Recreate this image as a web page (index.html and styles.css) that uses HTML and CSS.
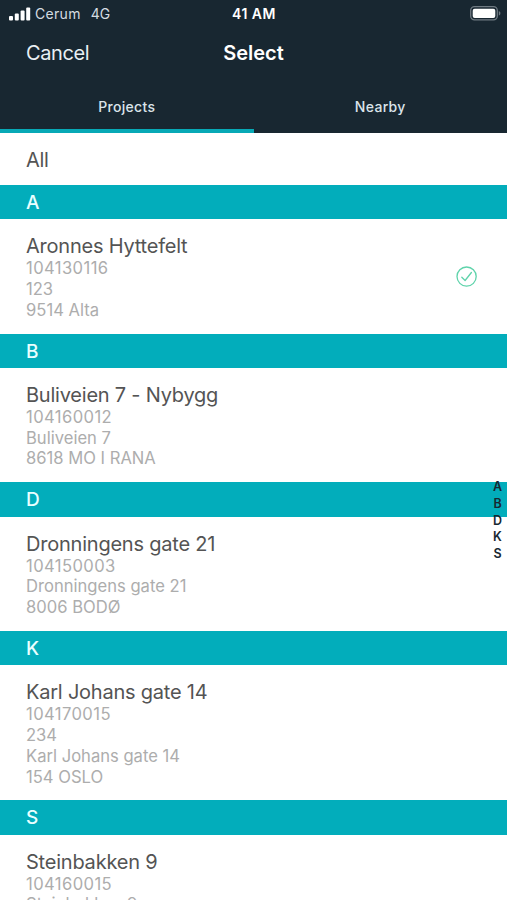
FILE: index.html
```html
<!DOCTYPE html>
<html lang="en">
<head>
    <meta charset="UTF-8">
    <meta name="viewport" content="width=device-width, initial-scale=1.0">
    <title>Select</title>
    <link rel="stylesheet" href="styles.css">
</head>
<body>
    <header class="header">
        <div class="status-bar">
            <div class="carrier">
                <svg class="signal" width="22" height="14" viewBox="0 0 22 14" fill="#fff">
                    <rect x="0" y="9" width="4" height="4.5" rx="1"/>
                    <rect x="5.8" y="6.5" width="4" height="7" rx="1"/>
                    <rect x="11.6" y="3.5" width="4" height="10" rx="1"/>
                    <rect x="17.2" y="0.5" width="4" height="13" rx="1"/>
                </svg>
                <span class="carrier-name">Cerum</span>
                <span class="network">4G</span>
            </div>
            <span class="time">41 AM</span>
            <svg class="battery" width="31" height="15" viewBox="0 0 31 15">
                <rect x="0.7" y="0.7" width="26.6" height="13.2" rx="3.8" fill="none" stroke="#6f7a82" stroke-width="1.3"/>
                <rect x="2.7" y="2.7" width="22.6" height="9.2" rx="2" fill="#fff"/>
                <path d="M28.8 5v4.6c1-.4 1.6-1.3 1.6-2.3s-.6-1.9-1.6-2.3z" fill="#6f7a82"/>
            </svg>
        </div>
        <nav class="nav-bar">
            <a class="cancel">Cancel</a>
            <h1 class="title">Select</h1>
        </nav>
        <div class="tabs">
            <div class="tab active">Projects</div>
            <div class="tab">Nearby</div>
        </div>
    </header>

    <main class="list">
        <div class="all">All</div>

        <h2 class="section">A</h2>
        <div class="item">
            <div class="info">
                <h3 class="name">Aronnes Hyttefelt</h3>
                <p class="number">104130116</p>
                <p>123</p>
                <p>9514 Alta</p>
            </div>
            <svg class="check" width="22" height="22" viewBox="0 0 22 22" fill="none" stroke="#5fd3ab" stroke-width="1.3">
                <circle cx="10.6" cy="10.6" r="9.6"/>
                <path d="M5.8 11.2l3.3 3.3 6.3-8" stroke-linecap="round" stroke-linejoin="round"/>
            </svg>
        </div>

        <h2 class="section">B</h2>
        <div class="item">
            <div class="info">
                <h3 class="name">Buliveien 7 - Nybygg</h3>
                <p class="number">104160012</p>
                <p>Buliveien 7</p>
                <p>8618 MO I RANA</p>
            </div>
        </div>

        <h2 class="section">D</h2>
        <div class="item">
            <div class="info">
                <h3 class="name">Dronningens gate 21</h3>
                <p class="number">104150003</p>
                <p>Dronningens gate 21</p>
                <p>8006 BODØ</p>
            </div>
        </div>

        <h2 class="section">K</h2>
        <div class="item">
            <div class="info">
                <h3 class="name">Karl Johans gate 14</h3>
                <p class="number">104170015</p>
                <p>234</p>
                <p>Karl Johans gate 14</p>
                <p>154 OSLO</p>
            </div>
        </div>

        <h2 class="section">S</h2>
        <div class="item">
            <div class="info">
                <h3 class="name">Steinbakken 9</h3>
                <p class="number">104160015</p>
                <p>Steinbakken 9</p>
            </div>
        </div>
    </main>

    <div class="index">
        <span>A</span>
        <span>B</span>
        <span>D</span>
        <span>K</span>
        <span>S</span>
    </div>
</body>
</html>
```

FILE: styles.css
```css
* {
    box-sizing: border-box;
}

body {
    margin: 0;
    height: 900px;
    overflow: hidden;
    position: relative;
    display: flex;
    flex-direction: column;
    background-color: #fff;
    font-family: Inter, "Liberation Sans", sans-serif;
}

h1, h2, h3, p {
    margin: 0;
    font-weight: 400;
}

.header {
    flex: none;
    height: 133px;
    background-color: #182731;
    color: #fff;
    display: flex;
    flex-direction: column;
}

.status-bar {
    height: 27px;
    padding: 0 6px 0 9px;
    display: grid;
    grid-template-columns: 1fr auto 1fr;
    align-items: center;
    font-size: 14px;
}

.carrier {
    display: flex;
    align-items: center;
    color: #d5dce1;
}

.carrier-name {
    margin-left: 4px;
    letter-spacing: 0.3px;
}

.network {
    margin-left: 10px;
}

.time {
    margin-right: 2px;
    font-weight: 600;
    letter-spacing: 0.5px;
}

.battery {
    justify-self: end;
}

.nav-bar {
    height: 52px;
    padding: 0 26px;
    display: grid;
    grid-template-columns: 1fr auto 1fr;
    align-items: center;
    font-size: 20px;
}

.cancel {
    color: #e9f0f4;
    letter-spacing: -0.4px;
}

.title {
    font-size: 20px;
    font-weight: 600;
}

.tabs {
    flex: 1;
    display: flex;
}

.tab {
    flex: 1;
    display: flex;
    align-items: center;
    justify-content: center;
    padding-top: 4px;
    border-bottom: 4px solid transparent;
    font-size: 14px;
    font-weight: 500;
    letter-spacing: 0.3px;
    color: #dbe4ea;
}

.tab.active {
    border-bottom-color: #07a9b6;
}

.list {
    flex: none;
}

.all {
    height: 52px;
    padding: 0 26px;
    line-height: 54px;
    font-size: 20px;
    letter-spacing: -0.3px;
    color: #545454;
}

.section {
    height: 34.2px;
    padding: 0 26px;
    line-height: 35px;
    background-color: #02adbb;
    color: #e9ffff;
    font-size: 19px;
    font-weight: 500;
}

.item {
    display: flex;
    align-items: center;
    justify-content: space-between;
    padding: 14.2px 29px 13.2px 26px;
}

.name {
    height: 25px;
    font-size: 20px;
    line-height: 26px;
    letter-spacing: -0.22px;
    color: #545454;
}

.item p {
    font-size: 16.6px;
    line-height: 20.7px;
    color: #adadad;
}

.item .number {
    letter-spacing: 0.4px;
}

/* letter index over the right edge of the list */
.index {
    position: absolute;
    top: 479px;
    right: 4px;
    width: 11px;
    display: flex;
    flex-direction: column;
    align-items: center;
    font-size: 12.5px;
    font-weight: 600;
    line-height: 16.8px;
    color: #182731;
}
```
